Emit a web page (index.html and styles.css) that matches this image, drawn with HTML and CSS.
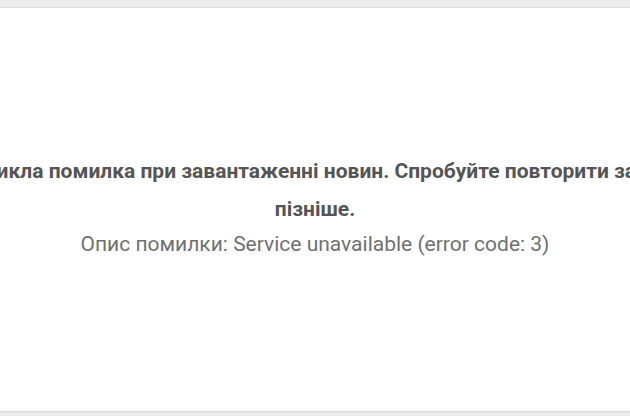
FILE: index.html
```html
<!DOCTYPE html>
<html lang="uk">
<head>
<meta charset="utf-8">
<link rel="stylesheet" href="styles.css">
</head>
<body>
<div class="frame">
  <div class="panel">
    <div class="message">
      <p class="title">Виникла помилка при завантаженні новин. Спробуйте повторити запит пізніше.</p>
      <p class="detail">Опис помилки: Service unavailable (error code: 3)</p>
    </div>
  </div>
</div>
</body>
</html>
```

FILE: styles.css
```css
html, body {
  margin: 0;
  padding: 0;
  width: 630px;
  height: 416px;
  overflow: hidden;
  background: #ececec;
  font-family: Roboto, "Noto Sans", sans-serif;
}
.frame {
  height: 416px;
  display: flex;
  flex-direction: column;
  padding: 7px 0 4px;
  box-sizing: border-box;
}
.panel {
  flex: 1;
  background: #fff;
  border-top: 1px solid #dcdcdc;
  border-bottom: 1px solid #d8d8d8;
  overflow: hidden;
  display: flex;
  justify-content: center;
}
.message {
  flex: none;
  width: 750px;
  padding-top: 144px;
  text-align: center;
}
.title {
  margin: 0;
  font-size: 21px;
  font-weight: 700;
  line-height: 38px;
  color: #555;
}
.detail {
  margin: 0;
  font-size: 21px;
  line-height: 32px;
  color: #707070;
}
```
